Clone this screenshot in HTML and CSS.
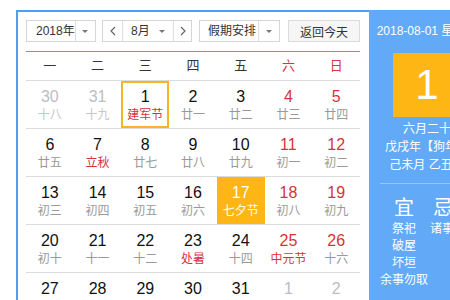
FILE: index.html
```html
<!DOCTYPE html>
<html lang="zh-CN">
<head>
    <meta charset="UTF-8">
    <title>万年历</title>
    <link rel="stylesheet" href="styles.css">
</head>
<body>
    <div class="calendar">
        <div class="main">
            <div class="toolbar">
                <div class="sel sel-year">
                    <span class="sel-text">2018年</span>
                    <span class="sel-arrow"><i class="tri"></i></span>
                </div>
                <div class="sel sel-month">
                    <span class="nav nav-prev"><svg width="6" height="10" viewBox="0 0 6 10"><polyline points="5,1 1,5 5,9" fill="none" stroke="#666" stroke-width="1.2"/></svg></span>
                    <span class="month-mid"><span class="sel-text">8月</span><i class="tri"></i></span>
                    <span class="nav nav-next"><svg width="6" height="10" viewBox="0 0 6 10"><polyline points="1,1 5,5 1,9" fill="none" stroke="#666" stroke-width="1.2"/></svg></span>
                </div>
                <div class="sel sel-holiday">
                    <span class="sel-text">假期安排</span>
                    <span class="sel-arrow"><i class="tri"></i></span>
                </div>
                <button class="btn-today">返回今天</button>
            </div>

            <div class="week">
                <span>一</span><span>二</span><span>三</span><span>四</span><span>五</span>
                <span class="red">六</span><span class="red">日</span>
            </div>

            <div class="days">
                <div class="day other"><b>30</b><em>十八</em></div>
                <div class="day other"><b>31</b><em>十九</em></div>
                <div class="day selected"><b>1</b><em class="fest">建军节</em></div>
                <div class="day"><b>2</b><em>廿一</em></div>
                <div class="day"><b>3</b><em>廿二</em></div>
                <div class="day weekend"><b>4</b><em>廿三</em></div>
                <div class="day weekend"><b>5</b><em>廿四</em></div>
            </div>
            <div class="days">
                <div class="day"><b>6</b><em>廿五</em></div>
                <div class="day"><b>7</b><em class="fest">立秋</em></div>
                <div class="day"><b>8</b><em>廿七</em></div>
                <div class="day"><b>9</b><em>廿八</em></div>
                <div class="day"><b>10</b><em>廿九</em></div>
                <div class="day weekend"><b>11</b><em>初一</em></div>
                <div class="day weekend"><b>12</b><em>初二</em></div>
            </div>
            <div class="days">
                <div class="day"><b>13</b><em>初三</em></div>
                <div class="day"><b>14</b><em>初四</em></div>
                <div class="day"><b>15</b><em>初五</em></div>
                <div class="day"><b>16</b><em>初六</em></div>
                <div class="day today"><b>17</b><em>七夕节</em></div>
                <div class="day weekend"><b>18</b><em>初八</em></div>
                <div class="day weekend"><b>19</b><em>初九</em></div>
            </div>
            <div class="days">
                <div class="day"><b>20</b><em>初十</em></div>
                <div class="day"><b>21</b><em>十一</em></div>
                <div class="day"><b>22</b><em>十二</em></div>
                <div class="day"><b>23</b><em class="fest">处暑</em></div>
                <div class="day"><b>24</b><em>十四</em></div>
                <div class="day weekend"><b>25</b><em class="fest">中元节</em></div>
                <div class="day weekend"><b>26</b><em>十六</em></div>
            </div>
            <div class="days">
                <div class="day"><b>27</b><em>十七</em></div>
                <div class="day"><b>28</b><em>十八</em></div>
                <div class="day"><b>29</b><em>十九</em></div>
                <div class="day"><b>30</b><em>二十</em></div>
                <div class="day"><b>31</b><em>廿一</em></div>
                <div class="day other"><b>1</b><em>廿二</em></div>
                <div class="day other"><b>2</b><em>廿三</em></div>
            </div>
        </div>

        <div class="panel">
            <div class="panel-date">2018-08-01 星期三</div>
            <div class="panel-day">1</div>
            <div class="panel-lunar">
                <p>六月二十</p>
                <p>戊戌年【狗年】</p>
                <p>己未月 乙丑日</p>
            </div>
            <div class="almanac">
                <div class="yi">
                    <h3>宜</h3>
                    <p>祭祀</p>
                    <p>破屋</p>
                    <p>坏垣</p>
                    <p>余事勿取</p>
                </div>
                <div class="ji">
                    <h3>忌</h3>
                    <p>诸事不宜</p>
                </div>
            </div>
        </div>
    </div>
</body>
</html>
```

FILE: styles.css
```css
body {
    margin: 0;
    background-color: #fff;
    font-family: "Liberation Sans", Arial, "Noto Sans CJK SC", sans-serif;
    font-size: 12px;
    color: #333;
    overflow: hidden;
}

.calendar {
    display: flex;
    margin: 10px 0 0 16px;
    width: 520px;
}

.main {
    width: 334px;
    padding: 8px 9px 0 8px;
    border-top: 2px solid #4f9ef2;
    border-left: 2px solid #4f9ef2;
}

/* barra superior */
.toolbar {
    display: flex;
    height: 22px;
    padding-bottom: 9px;
    border-bottom: 1px solid #4f9ef2;
}

.sel {
    display: flex;
    box-sizing: border-box;
    height: 22px;
    border: 1px solid #d6d6d6;
    background-color: #fff;
    line-height: 20px;
    white-space: nowrap;
}

.sel-text {
    flex: 1;
    padding-left: 9px;
}

.sel-arrow {
    display: flex;
    align-items: center;
    justify-content: center;
    width: 20px;
    border-left: 1px solid #dedede;
}

.tri {
    display: block;
    width: 0;
    height: 0;
    border-left: 3px solid transparent;
    border-right: 3px solid transparent;
    border-top: 3px solid #777;
}

.sel-year {
    width: 70px;
}

.sel-month {
    width: 90px;
    margin-left: 6px;
}

.nav {
    display: flex;
    align-items: center;
    justify-content: center;
}

.nav-prev {
    width: 19px;
    border-right: 1px solid #dedede;
}

.nav-next {
    width: 17px;
    border-left: 1px solid #dedede;
}

.month-mid {
    display: flex;
    align-items: center;
    flex: 1;
    padding-right: 8px;
}

.month-mid .sel-text {
    padding-left: 8px;
}

.sel-holiday {
    width: 81px;
    margin-left: 7px;
}

.sel-holiday .sel-text {
    padding-left: 8px;
}

.btn-today {
    box-sizing: border-box;
    width: 72px;
    height: 22px;
    margin-left: 8px;
    padding: 0;
    border: 1px solid #dcdcdc;
    background-color: #f6f6f6;
    font-family: inherit;
    font-size: 12px;
    color: #333;
}

/* cabecera de semana */
.week {
    display: grid;
    grid-template-columns: repeat(7, 1fr);
    height: 28px;
    line-height: 28px;
    text-align: center;
    font-size: 13px;
}

.red {
    color: #d6333a;
}

/* dias */
.days {
    display: grid;
    grid-template-columns: repeat(7, 1fr);
    border-top: 1px solid #dcdcdc;
}

.day {
    box-sizing: border-box;
    height: 47px;
    padding-top: 6px;
    text-align: center;
}

.day b {
    display: block;
    line-height: 20px;
    font-size: 16px;
    font-weight: normal;
    color: #111;
}

.day em {
    display: block;
    line-height: 16px;
    font-size: 12px;
    font-style: normal;
    color: #999;
}

.day.weekend b {
    color: #d6333a;
}

.day.other b {
    color: #bdbdbd;
}

.day.other em {
    color: #c6c6c6;
}

.day em.fest {
    color: #d6333a;
}

.day.selected {
    padding-top: 4px;
    border: 2px solid #f7b428;
}

.day.today {
    background-color: #fdb614;
}

.day.today b,
.day.today em {
    color: #fff;
}

/* panel lateral */
.panel {
    width: 116px;
    height: 290px;
    background-color: #62aaf8;
    color: #fff;
    text-align: center;
}

.panel-date {
    margin-top: 11px;
    line-height: 20px;
    white-space: nowrap;
}

.panel-day {
    width: 68px;
    height: 64px;
    margin: 12px auto 0;
    background-color: #fdb614;
    line-height: 64px;
    font-size: 42px;
}

.panel-lunar {
    margin-top: 3px;
    padding-bottom: 9px;
    margin-left: 11px;
    margin-right: 11px;
    border-bottom: 1px solid rgba(255, 255, 255, 0.35);
}

.panel-lunar p {
    margin: 0;
    line-height: 18px;
    white-space: nowrap;
}

.almanac {
    display: grid;
    grid-template-columns: 48px 48px;
    padding-left: 11px;
    margin-top: 11px;
}

.almanac h3 {
    margin: 0;
    line-height: 26px;
    font-size: 20px;
    font-weight: normal;
}

.almanac p {
    margin: 0;
    line-height: 17px;
    white-space: nowrap;
}

.ji {
    padding-left: 2px;
    text-align: left;
}

.ji h3 {
    padding-left: 3px;
}
```
